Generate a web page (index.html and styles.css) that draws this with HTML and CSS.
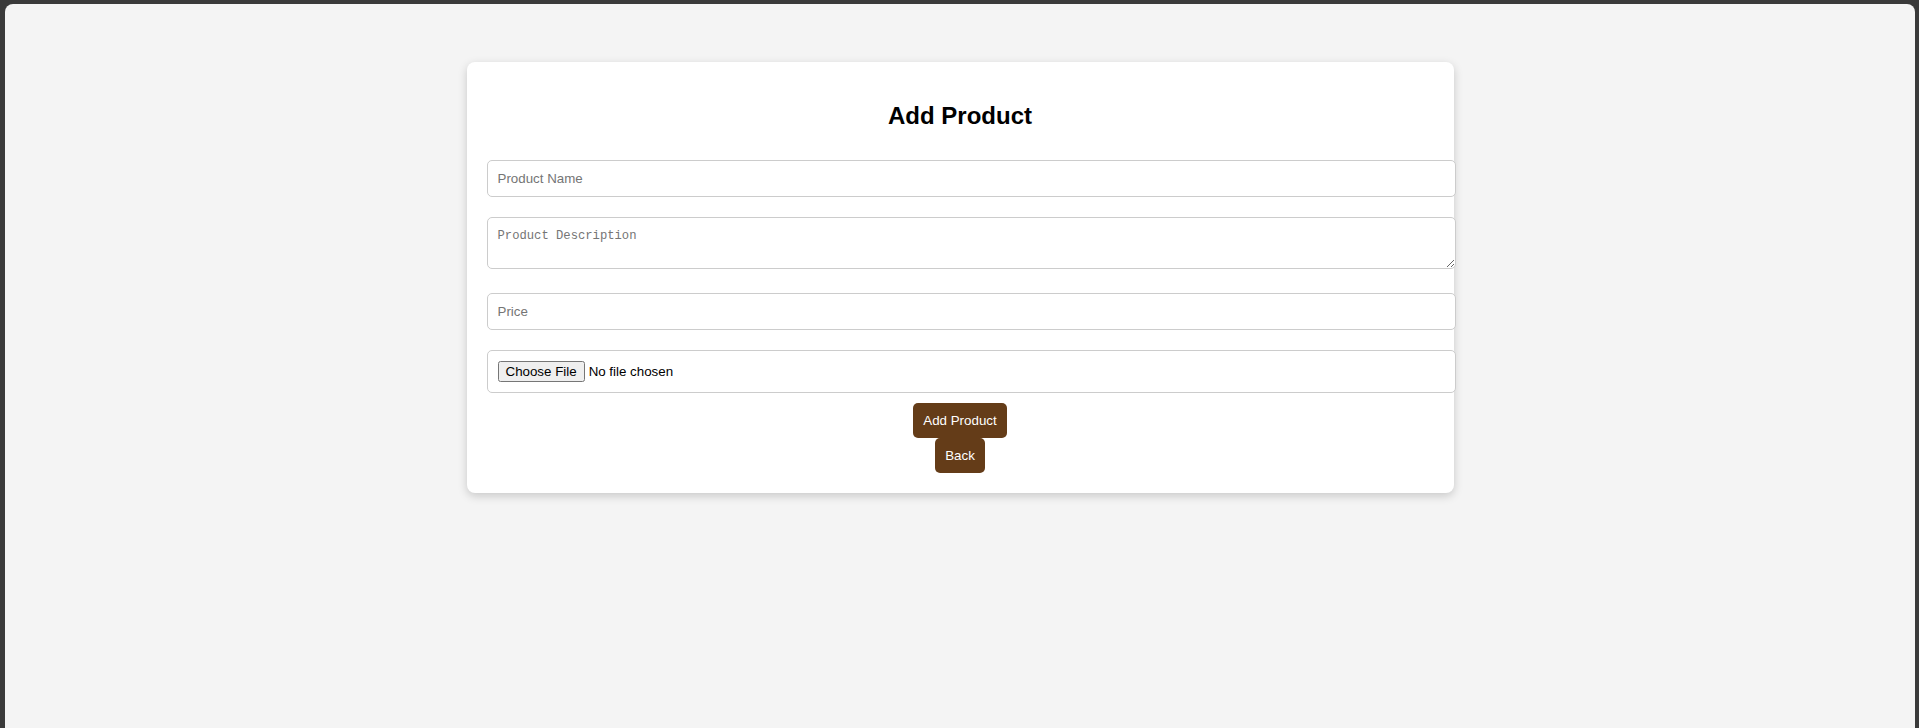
FILE: index.html
```html
<!DOCTYPE html>
<html lang="en">
<head>
<meta charset="utf-8">
<title>Add Product</title>
<link rel="stylesheet" href="styles.css">
</head>
<body>
<div class="window">
  <div class="container">
    <h2 class="title">Add Product</h2>
    <form class="form">
      <input class="field" type="text" placeholder="Product Name">
      <textarea class="field area" placeholder="Product Description"></textarea>
      <input class="field" type="number" placeholder="Price">
      <input class="field" type="file">
      <button class="btn" type="button">Add Product</button>
      <button class="btn" type="button">Back</button>
    </form>
  </div>
</div>
</body>
</html>
```

FILE: styles.css
```css
html, body {
  margin: 0;
  padding: 0;
  height: 100%;
}
body {
  background: #3a3a3a;
  font-family: "Liberation Sans", Arial, sans-serif;
  overflow: hidden;
}
.window {
  margin: 4px 4px 0 5px;
  height: calc(100% - 4px);
  background: #f4f4f4;
  border-radius: 8px 8px 0 0;
  padding: 8px;
  box-sizing: border-box;
}
.container {
  width: 50%;
  margin: 50px auto;
  background: #fff;
  padding: 20px;
  border-radius: 8px;
  box-shadow: 0 3px 10px rgba(0, 0, 0, 0.18);
}
.title {
  text-align: center;
  font-size: 24px;
  font-weight: bold;
  margin: 0.83em 0;
  color: #000;
}
.field {
  width: 100%;
  padding: 10px;
  margin: 10px 0;
  border: 1px solid #ccc;
  border-radius: 5px;
  font-family: "Liberation Sans", Arial, sans-serif;
  font-size: 13.33px;
  color: #000;
  background: #fff;
}
.field::placeholder {
  color: #757575;
}
.area {
  font-family: "Liberation Mono", monospace;
  font-size: 12.2px;
  line-height: 15px;
  padding-top: 11px;
  padding-bottom: 9px;
  height: 52px;
  box-sizing: border-box;
  width: calc(100% + 22px);
}
.btn {
  display: block;
  margin: 0 auto;
  background: #643c18;
  color: #fff;
  padding: 10px;
  border: none;
  border-radius: 5px;
  font-family: "Liberation Sans", Arial, sans-serif;
  font-size: 13.33px;
  cursor: pointer;
}
```
